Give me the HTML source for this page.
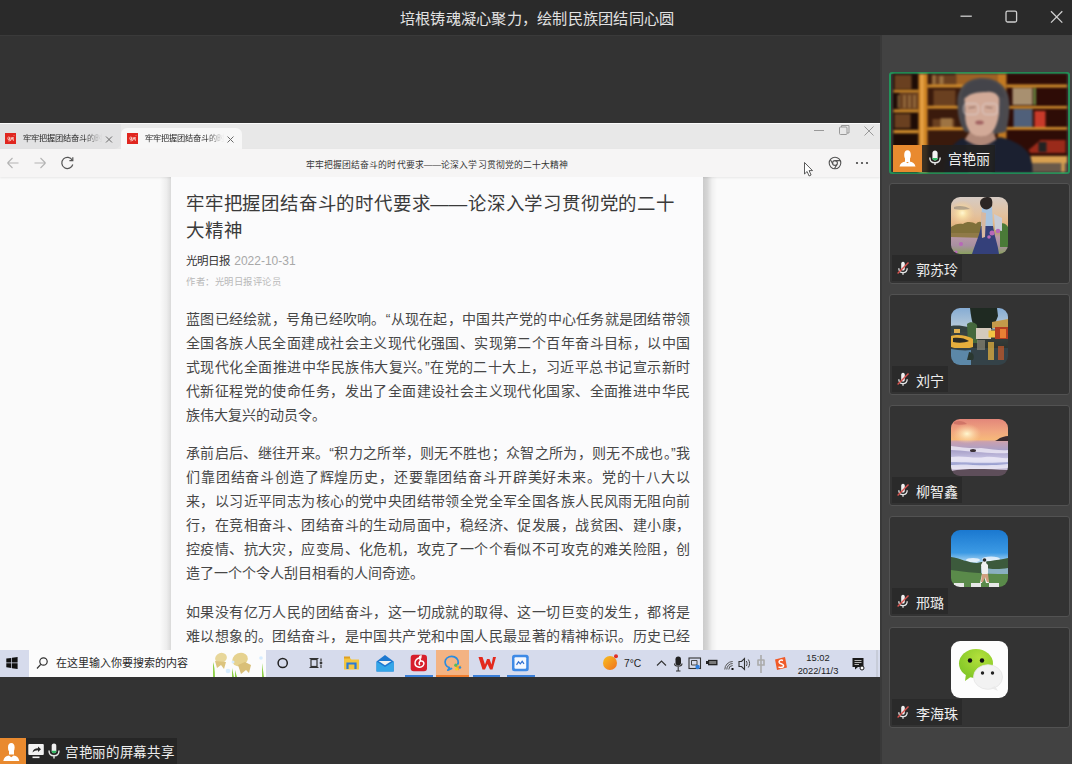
<!DOCTYPE html>
<html lang="zh-CN"><head><meta charset="utf-8">
<style>
*{margin:0;padding:0;box-sizing:border-box}
html,body{width:1072px;height:764px;overflow:hidden;background:#333;font-family:"Liberation Sans",sans-serif}
.a{position:absolute}
#title{left:0;top:0;width:1072px;height:35px;background:#2a2a2a}
#title .t{left:400px;width:274px;top:8.5px;text-align:justify;text-align-last:justify;color:#e2e2e2;font-size:15.2px;line-height:19px;white-space:nowrap}
#main{left:0;top:35px;width:880px;height:729px;background:#333;border-top:1px solid #3a3a3a}
#panel{left:880px;top:35px;width:192px;height:729px;background:#424242;border-left:2px solid #393939}
#browser{left:0;top:123px;width:880px;height:554px;background:#fafafa;overflow:hidden}
.tabs{left:0;top:0.5px;width:880px;height:26px;background:#e8e8e8}
.addr{left:0;top:26px;width:880px;height:28px;background:#f6f5f5;box-shadow:0 1px 2px rgba(0,0,0,.08)}
.card{left:171px;top:54px;width:532px;height:480px;background:#fbfbfc}
.shl{left:160px;top:54px;width:11px;height:480px;background:linear-gradient(90deg,rgba(0,0,0,0),rgba(0,0,0,.05) 60%,rgba(0,0,0,.13))}
.shr{left:703px;top:54px;width:14px;height:480px;background:linear-gradient(90deg,rgba(0,0,0,.19),rgba(0,0,0,.15) 30%,rgba(0,0,0,.04) 65%,rgba(0,0,0,0))}
.taskbar{left:0;top:526.5px;width:880px;height:27px;background:#d6dbec}
.tile{left:889px;width:181px;height:101px;background:#333;border:1px solid #525252;border-radius:3px}
.av{left:951px;width:57px;height:57px;border-radius:9px;overflow:hidden}
.av svg{display:block;filter:blur(.7px)}
.lab{left:892px;height:26.2px;background:#2a2a2a}
.fav{width:11px;height:11px;background:#e0261f;color:#fff;font-size:8px;line-height:11px;text-align:center;overflow:hidden}
.fav i{font-style:normal;display:block;transform:skewX(-12deg)}
.tt{font-size:8.2px;line-height:12px;color:#262626;white-space:nowrap;width:80px;overflow:hidden;-webkit-mask-image:linear-gradient(90deg,#000 76%,transparent 99%)}
.art{width:520px;height:470px}
.art .h1{width:488px;text-align:justify;text-align-last:justify;font-size:18.45px;line-height:27px;color:#3a3a3a;white-space:nowrap;height:27px;position:relative;top:2px}
.art .src{position:absolute;top:66px;left:0;font-size:11.5px;line-height:14px;color:#333;white-space:nowrap}
.art .src b{font-weight:normal}
.art .src span{color:#a8a8a8;font-size:12px;margin-left:1px}
.art .au{position:absolute;top:87.5px;left:0;width:95px;text-align:justify;text-align-last:justify;font-size:9.3px;line-height:12px;color:#b8b8b8;white-space:nowrap}
.art .p{position:absolute;left:0;font-size:14px;color:#474747;white-space:nowrap}
.art .p div{height:24px;line-height:24px;width:504px;text-align:justify;text-align-last:justify}

.nm{color:#eee;font-size:14px;line-height:16px;white-space:nowrap;text-align:justify;text-align-last:justify}
</style></head><body>
<div id="title" class="a"><div class="t a">培根铸魂凝心聚力，绘制民族团结同心圆</div>
<svg class="a" style="left:0;top:0" width="1072" height="35"><g stroke="#cfcfcf" stroke-width="1.3" fill="none">
<path d="M960.5 16.2H971.8"/><rect x="1006" y="11.2" width="10.6" height="10.8" rx="1.5"/><path d="M1051 11.3L1062.3 22.6M1062.3 11.3L1051 22.6"/></g></svg></div>
<div id="main" class="a"></div>
<div id="panel" class="a"></div>
<div id="browser" class="a">
  <div class="tabs a"></div>
  <div class="a" style="left:0;top:1px;width:121px;height:25px;background:#e2e2e3;border-radius:0 0 7px 0"></div>
  <div class="a" style="left:121px;top:5px;width:121px;height:22px;background:#f7f7f7;border-radius:6px 6px 0 0"></div>
  <div class="fav a" style="left:5px;top:10px"><svg width="11" height="11" style="display:block"><g stroke="#fbe8e0" stroke-width=".9" fill="none" opacity=".9"><path d="M3.8 3.5C2.8 4.5 2.5 6 3.2 6.6C4 7 4.6 5.5 4.7 4.3M4.7 4.3L4 8.5"/><path d="M5.5 8L6.3 4.5L7 6.5L8 4L8.4 7.8"/><path d="M9 2.5L9.3 3"/></g></svg></div>
  <div class="fav a" style="left:126.5px;top:10px"><svg width="11" height="11" style="display:block"><g stroke="#fbe8e0" stroke-width=".9" fill="none" opacity=".9"><path d="M3.8 3.5C2.8 4.5 2.5 6 3.2 6.6C4 7 4.6 5.5 4.7 4.3M4.7 4.3L4 8.5"/><path d="M5.5 8L6.3 4.5L7 6.5L8 4L8.4 7.8"/><path d="M9 2.5L9.3 3"/></g></svg></div>
  <div class="tt a" style="left:22.5px;top:9.8px">牢牢把握团结奋斗的时代要求</div>
  <div class="tt a" style="left:144.5px;top:9.8px">牢牢把握团结奋斗的时代要求</div>
  <svg class="a" style="left:0;top:0" width="880" height="54"><g stroke="#6a6a6a" stroke-width="1" fill="none">
  <path d="M106 13.5L112 19.5M112 13.5L106 19.5M227.5 13.5L233.5 19.5M233.5 13.5L227.5 19.5"/></g>
  <g stroke="#999" stroke-width="1" fill="none"><path d="M814 7.5H824"/><rect x="839.5" y="4" width="7.5" height="7.5" rx="1"/><path d="M841.5 4V2.5H849V10H847"/>
  <path d="M864.5 3.5L873.5 12.5M873.5 3.5L864.5 12.5"/></g>
  </svg>
  <div class="addr a"></div>
  <svg class="a" style="left:0;top:26px" width="880" height="28">
  <g stroke="#b4b4b4" stroke-width="1.1" fill="none"><path d="M7.5 14H18.5M7.5 14L12.5 9M7.5 14L12.5 19"/><path d="M34.5 14H45.5M45.5 14L40.5 9M45.5 14L40.5 19"/></g>
  <g stroke="#555" stroke-width="1.2" fill="none"><path d="M72.3 11.2A5.6 5.6 0 1 0 72.8 15.5"/><path d="M72.8 8.2V11.6H69.4"/></g>
  <g stroke="#555" stroke-width="1.1" fill="none"><circle cx="835" cy="14" r="5.8"/><circle cx="835" cy="14" r="2.4"/><path d="M835 11.6H840.4M832.9 15.2L830.3 10.5M837 15.4L834.4 19.7"/></g>
  <g fill="#444"><circle cx="857" cy="14" r="1.1"/><circle cx="862" cy="14" r="1.1"/><circle cx="867" cy="14" r="1.1"/></g>
  <path d="M804.5 13.5V25L807.1 22.5L809.1 27L811.1 26L809.1 21.6H812.5Z" fill="#fff" stroke="#333" stroke-width="0.8"/>
  </svg>
  <div class="a" style="left:306px;top:37px;width:262px;text-align:justify;text-align-last:justify;font-size:8.8px;line-height:10px;color:#333;white-space:nowrap">牢牢把握团结奋斗的时代要求——论深入学习贯彻党的二十大精神</div>
  <div class="shl a"></div><div class="shr a"></div><div class="card a"></div>
  <div class="art a" style="left:186px;top:65px">
    <div class="h1">牢牢把握团结奋斗的时代要求——论深入学习贯彻党的二十</div>
    <div class="h1" style="width:55.5px">大精神</div>
    <div class="src"><b>光明日报</b> <span>2022-10-31</span></div>
    <div class="au">作者：光明日报评论员</div>
    <div class="p" style="top:119px">
      <div>蓝图已经绘就，号角已经吹响。“从现在起，中国共产党的中心任务就是团结带领</div>
      <div>全国各族人民全面建成社会主义现代化强国、实现第二个百年奋斗目标，以中国</div>
      <div>式现代化全面推进中华民族伟大复兴。”在党的二十大上，习近平总书记宣示新时</div>
      <div>代新征程党的使命任务，发出了全面建设社会主义现代化国家、全面推进中华民</div>
      <div style="width:140px">族伟大复兴的动员令。</div>
    </div>
    <div class="p" style="top:253px">
      <div>承前启后、继往开来。“积力之所举，则无不胜也；众智之所为，则无不成也。”我</div>
      <div>们靠团结奋斗创造了辉煌历史，还要靠团结奋斗开辟美好未来。党的十八大以</div>
      <div>来，以习近平同志为核心的党中央团结带领全党全军全国各族人民风雨无阻向前</div>
      <div>行，在竞相奋斗、团结奋斗的生动局面中，稳经济、促发展，战贫困、建小康，</div>
      <div>控疫情、抗大灾，应变局、化危机，攻克了一个个看似不可攻克的难关险阻，创</div>
      <div style="width:238px">造了一个个令人刮目相看的人间奇迹。</div>
    </div>
    <div class="p" style="top:411.5px">
      <div>如果没有亿万人民的团结奋斗，这一切成就的取得、这一切巨变的发生，都将是</div>
      <div>难以想象的。团结奋斗，是中国共产党和中国人民最显著的精神标识。历史已经</div>
    </div>
  </div>
  <div class="taskbar a"></div>
  <div class="a" style="left:29px;top:527px;width:237px;height:27px;background:#fcfcfc"></div>
  <div class="a" style="left:56px;top:533px;width:132px;text-align:justify;text-align-last:justify;font-size:11px;line-height:14px;color:#2a2a2a;white-space:nowrap">在这里输入你要搜索的内容</div>
  <div class="a" style="left:436px;top:527px;width:33px;height:27px;background:#f3b383"></div>
  <div class="a" style="left:624px;top:533.5px;font-size:10.3px;line-height:14px;color:#1f1f1f;white-space:nowrap">7°C</div>
  <div class="a" style="left:797px;top:529px;width:42px;font-size:9.3px;line-height:12.5px;color:#222;white-space:nowrap;text-align:center">15:02<br>2022/11/3</div>
  <svg class="a" style="left:0;top:527px" width="880" height="27">
   <g fill="#111"><path d="M6.3 8.6L11.3 7.9V12.6H6.3Z"/><path d="M12 7.8L17.6 7V12.6H12Z"/><path d="M6.3 13.3H11.3V18L6.3 17.3Z"/><path d="M12 13.3H17.6V19L12 18.2Z"/></g>
   <g stroke="#333" stroke-width="1.2" fill="none"><circle cx="43.5" cy="11.5" r="3.7"/><path d="M40.8 14.3L37 18.5"/></g>
   <circle cx="282.7" cy="13" r="4.6" stroke="#222" stroke-width="1.5" fill="none"/>
   <g stroke="#333" stroke-width="1.2" fill="none"><rect x="311" y="9.5" width="6" height="7"/><path d="M309.5 8.5H318.5M309.5 17.5H318.5M321 8.5V11M321 15V18"/><circle cx="321" cy="13" r=".8" fill="#333"/></g>
   <g transform="translate(0,-1.5)"><path d="M344 9.5H350L351.5 11H359V21H344Z" fill="#f3c640"/><rect x="344" y="8" width="6" height="2" fill="#e0a020"/><path d="M347.5 20.5V15H355.5V20.5" stroke="#2a7bd8" stroke-width="2.2" fill="none"/>
   </g><path d="M376.5 11.5L385 5L393.7 11.5V21.5H376.5Z" fill="#1d78d0"/><path d="M376.5 11.5L385 17L393.7 11.5V21.5H376.5Z" fill="#34a6e8"/><path d="M378.5 11H391.5L385 15.3Z" fill="#f2f2f2"/>
   <g transform="translate(0,-3.2)"><rect x="410.7" y="8" width="16.3" height="16.4" rx="3" fill="#d71f2c"/><g stroke="#fff" stroke-width="1.5" fill="none"><path d="M421.5 11C417 10.5 414.5 14 415 17C415.7 20.5 420.5 21.5 423 19C425 17 423.7 14 421 14.3C419 14.6 418.5 17 420 18"/><path d="M420.5 14.3L419.7 10.5C419.5 9.5 420.5 9 421.8 9.5"/></g>
   </g><rect x="405" y="25" width="28" height="2" fill="#3b7fd8"/>
   <rect x="436" y="25" width="33" height="2" fill="#ef7d2e"/>
   <path d="M457.5 14.8A6.6 5.8 0 1 0 449.5 17.6L447.8 20.2L452.2 18.3" stroke="#2a8ce0" stroke-width="1.7" fill="none" stroke-linejoin="round"/><path d="M455 16L461.5 15.5L458.5 20.5Z" fill="#f7a52a"/><circle cx="455.8" cy="15.2" r="1.6" fill="#52bf5a"/><circle cx="456.5" cy="19" r="1.5" fill="#f5d020"/><circle cx="460" cy="17.5" r="1.2" fill="#2a8ce0"/>
   <g transform="translate(0,-2.5)"><path d="M478.5 9.5H482.5L485 17L487 11.5H489.5L491.5 17L493 9.5H496L492.5 22H490L487.5 16.5L485 22H482.5Z" fill="#e3291d"/>
   </g><rect x="473" y="25" width="27" height="2" fill="#3b7fd8"/>
   <g transform="translate(0,-3.2)"><rect x="512" y="8" width="16.7" height="16.4" rx="2.5" fill="#3e8ae6"/><rect x="514.5" y="10.5" width="11.7" height="11.4" rx="1" fill="#f4f8ff"/><path d="M516.5 18L518.5 15L520.3 17L522.2 14.5L524 17" stroke="#2f6fd0" stroke-width="1.2" fill="none"/>
   </g><rect x="507" y="25" width="28" height="2" fill="#3b7fd8"/>
   <defs><linearGradient id="wx" x1="0" y1="0" x2="1" y2="1"><stop offset="0" stop-color="#f8c020"/><stop offset="1" stop-color="#f07020"/></linearGradient></defs><circle cx="610" cy="13" r="7" fill="url(#wx)"/><circle cx="616" cy="6.3" r="2" fill="#e0302a"/>
   <path d="M657 15.5L661.5 11L666 15.5" stroke="#333" stroke-width="1.1" fill="none"/>
   <rect x="675.5" y="6.5" width="5.5" height="9" rx="2.7" fill="#222"/><path d="M674.5 13.5C674.5 17 682 17 682 13.5M678.2 17V20.5M676 21H680.5" stroke="#333" stroke-width="1.1" fill="none"/>
   <rect x="689" y="8" width="11.5" height="10.5" stroke="#333" stroke-width="1.1" fill="none"/><path d="M691.5 10.5H697V15H691.5Z" stroke="#333" stroke-width=".9" fill="none"/><circle cx="697.6" cy="17" r="2.2" fill="#2f7fe0"/>
   <rect x="708" y="9.8" width="9.5" height="5.5" fill="#222"/><rect x="706" y="11" width="2" height="3" fill="#222"/><rect x="709.2" y="11" width="7" height="3" fill="#7a7a7a"/>
   <g stroke="#555" stroke-width="1" fill="none"><path d="M724.8 19.5A8 8 0 0 1 732.7 11.5M726.8 19.5A6 6 0 0 1 732.7 13.5M728.8 19.5A4 4 0 0 1 732.7 15.5"/></g><rect x="731.5" y="18" width="2" height="2" fill="#111"/>
   <path d="M739 11.5H741.5L744.5 8.5V19.5L741.5 16.5H739Z" stroke="#333" stroke-width="1.1" fill="none"/><path d="M746.3 11C747.3 12.3 747.3 14.7 746.3 16M748.3 9.5C750 11.7 750 15.3 748.3 17.5" stroke="#444" stroke-width="1" fill="none"/>
   <g stroke="#aaa" stroke-width="1.6" fill="none"><path d="M761 5V23M757.5 10H764.5M758 10V15H764V10"/></g>
   <path d="M775 9.5L785 7L787 17.5L777 20Z" fill="#f05a28"/><path d="M783 10.5C781 9.5 778.5 10.5 779.2 12.5C779.8 14 783 13.5 783.5 15.5C784 17.5 780.5 18 778.5 16.8" stroke="#fff" stroke-width="1.5" fill="none"/>
   <path d="M852.5 8H863.5V17H858L855 19.5V17H852.5Z" fill="#1a1a1a"/><g stroke="#ddd" stroke-width=".8"><path d="M854.5 10.5H861.5M854.5 12.5H861.5M854.5 14.5H859"/></g><circle cx="862" cy="18" r="2" fill="#fff" stroke="#1a1a1a" stroke-width="1"/>
   <rect x="876.5" y="0" width="1" height="27" fill="#b8bdc6"/>
  </svg>
  <svg class="a" style="left:212px;top:527px" width="54" height="27">
   <ellipse cx="9" cy="8" rx="6" ry="5" fill="#e8d79a" transform="rotate(-20 9 8)"/><path d="M3 11L5 18L9 15L12 19L14 12" fill="#dcc47e"/>
   <ellipse cx="28" cy="9.5" rx="8" ry="6.5" fill="#e6d28f" transform="rotate(-25 28 9.5)"/><path d="M26 15L29 24L34 20L37 23L39 15L33 12Z" fill="#d9bf78"/>
   <path d="M1 27V12C2 15 3 20 3 27Z" fill="#8fd04a"/><path d="M20 27V18L22 27ZM23 27V20L25 27Z" fill="#8fd04a"/><path d="M50 27V13L52 27Z" fill="#8fd04a"/>
   <circle cx="16" cy="21" r="2.3" fill="#d6ecff"/><circle cx="21" cy="12" r="1.5" fill="#d6ecff"/><circle cx="49" cy="8" r="1.8" fill="#d6ecff"/>
  </svg>
</div>
<div class="a" style="left:889px;top:71.8px;width:181.2px;height:102px;border:2px solid #23935a;border-radius:3px;background:#3a3a3a"></div>
<svg class="a" style="left:892.5px;top:74px;filter:blur(.8px)" width="174" height="98" viewBox="892.5 74 174 98">
 <rect x="892.5" y="74" width="174" height="98" fill="#2a0e08"/>
 <rect x="892.5" y="74" width="26" height="98" fill="#1e0c06"/>
 <rect x="927" y="74" width="71" height="98" fill="#3a1a0c"/>
 <rect x="1006" y="74" width="61" height="98" fill="#2e0c06"/>
 <rect x="955" y="74" width="45" height="11" fill="#b8742a" opacity=".8"/>
 <g fill="#6a4020"><rect x="894" y="75" width="17" height="14"/><rect x="899" y="93" width="19" height="16"/><rect x="894" y="114" width="16" height="14"/><rect x="931" y="75" width="25" height="10"/><rect x="933" y="90" width="22" height="16"/><rect x="932" y="119" width="22" height="9"/></g>
 <g fill="#c9a060" opacity=".55"><rect x="932" y="75" width="3" height="9"/><rect x="939" y="76" width="4" height="8"/><rect x="940" y="118" width="12" height="10"/><rect x="897" y="95" width="2" height="13"/><rect x="903" y="95" width="2" height="13"/><rect x="908" y="95" width="2" height="13"/><rect x="913" y="95" width="2" height="13"/></g>
 <g fill="#d08c2c"><rect x="893" y="89.8" width="25" height="2.7"/><rect x="893" y="109.4" width="25" height="3"/><rect x="893" y="129.9" width="25" height="3.4"/><rect x="927" y="84.5" width="71" height="3"/><rect x="927" y="105.8" width="71" height="2.8"/><rect x="927" y="127.2" width="71" height="3"/><rect x="1006" y="84.5" width="61" height="3"/><rect x="1006" y="106" width="61" height="2.6"/><rect x="1006" y="127" width="61" height="2.8"/></g>
 <rect x="918" y="74" width="9" height="98" fill="#cf8424"/><rect x="920" y="74" width="3" height="98" fill="#e8a448"/>
 <rect x="997.5" y="74" width="8.5" height="98" fill="#c27a22"/>
 <g><rect x="1012" y="88" width="20" height="17" fill="#a89070"/><rect x="1033" y="88" width="2.5" height="17" fill="#6a8a40"/><rect x="1013" y="109" width="19" height="18" fill="#50607a"/><rect x="1034" y="111" width="11" height="16" fill="#c83a2a"/><path d="M1028 150L1040 140L1065 140V153H1030Z" fill="#9a2a1a"/><rect x="1038" y="142" width="8" height="10" fill="#222"/><rect x="1030" y="156" width="37" height="7" fill="#d8a050"/><rect x="1030" y="163" width="37" height="9" fill="#6a5a4a"/><rect x="1061" y="156" width="3" height="16" fill="#d8a050"/></g>
 <path d="M957 104C956 88 966 78 982 78C999 78 1009 89 1009 104C1009 114 1008 124 1005 132L995 134L965 132C959 126 957 114 957 104Z" fill="#4c4a4e"/>
 <path d="M963 98C963 91 970 88 980 88C990 88 998 92 999 100C1000 112 997 128 990 134C985 138 976 138 971 134C965 128 962 112 963 98Z" fill="#d2aa98"/>
 <path d="M961 100C961 86 970 80 982 80C995 80 1003 87 1004 99L999 98C996 93 992 91 986 92C978 92 970 93 966 97Z" fill="#44444a"/>
 <path d="M999 96L1004 98L1003 126L998 130Z" fill="#4a4a50"/><path d="M961 98L964 98L965 124L961 126Z" fill="#4a4a50"/>
 <g stroke="#e0d4d4" stroke-width="1.1" fill="none" opacity=".75"><rect x="963" y="103.5" width="15" height="11" rx="4"/><rect x="982" y="103.5" width="15" height="11" rx="4"/></g>
 <path d="M968 108L975 107M985 107L992 108" stroke="#6a4a44" stroke-width="1.2" opacity=".7"/>
 <ellipse cx="979" cy="122.5" rx="4.2" ry="2" fill="#a06060"/>
 <path d="M969 132C975 138 986 138 993 132L996 140L992 172H966L964 140Z" fill="#b08878"/>
 <path d="M944 172C945 156 950 144 962 138C968 142 974 146 980 146C986 146 993 142 999 137C1013 140 1024 146 1029 155C1032 162 1032 168 1032 172Z" fill="#1b2030"/>
 <path d="M966 143C972 148 988 148 994 143L992 172H968Z" fill="#34363e"/>
</svg>
<div class="a" style="left:892.5px;top:144.5px;width:29.5px;height:27.2px;background:#e98a2f"></div>
<svg class="a" style="left:892.5px;top:144.5px" width="30" height="28"><ellipse cx="14.5" cy="10" rx="3.3" ry="4.8" fill="#fff"/><path d="M6.5 21.5C7 18.5 9.5 16.8 12.5 16.5L14.5 18.2L16.5 16.5C19.5 16.8 22 18.5 22.5 21.5Z" fill="#fff"/><rect x="12" y="13" width="5" height="4" fill="#fff"/></svg>
<div class="a" style="left:922px;top:144.5px;width:72.5px;height:27.2px;background:rgba(30,30,30,.85)"></div>
<svg class="a" style="left:928px;top:149px" width="14" height="18"><path d="M7 1.5C8.4 1.5 9.6 2.5 9.6 4V9.2C9.6 10.6 8.4 11.4 7 11.4C5.6 11.4 4.4 10.6 4.4 9.2V4C4.4 2.5 5.6 1.5 7 1.5Z" fill="#f2f2f2"/><path d="M4.4 9H9.6V9.3C9.6 10.6 8.4 11.4 7 11.4C5.6 11.4 4.4 10.6 4.4 9.3Z" fill="#2fb760"/><path d="M1.8 8.5C1.8 12 4 13.8 7 13.8C10 13.8 12.2 12 12.2 8.5M7 13.8V16" stroke="#e8e8e8" stroke-width="1.4" fill="none"/></svg>
<div class="nm a" style="left:948px;top:151px;width:41px">宫艳丽</div>
<div class="tile a" style="top:183px"></div>
<div class="av a" style="top:197px"><svg width="57" height="57"><defs><linearGradient id="g1" x1="0" y1="0" x2="0" y2="1"><stop offset="0" stop-color="#d6cbc4"/><stop offset=".3" stop-color="#e2c2a0"/><stop offset=".45" stop-color="#e6b888"/><stop offset=".62" stop-color="#b8a070"/><stop offset=".7" stop-color="#b898a8"/><stop offset=".85" stop-color="#a890a0"/><stop offset="1" stop-color="#8aa060"/></linearGradient><radialGradient id="s1" cx=".2" cy=".28" r=".22"><stop offset="0" stop-color="#fff6d0"/><stop offset=".3" stop-color="#f8e0a8"/><stop offset="1" stop-color="#f0c890" stop-opacity="0"/></radialGradient></defs>
<rect width="57" height="57" fill="url(#g1)"/><rect width="57" height="57" fill="url(#s1)"/>
<path d="M3 10C8 8 15 9 19 12C14 13 7 13 3 12Z" fill="#8a8078" opacity=".6"/>
<path d="M0 37V30C4 27 8 26 12 27C16 24 22 25 25 27C27 24 31 24 33 28V38Z" fill="#80703a"/>
<path d="M0 40V36H34V41Z" fill="#907a48"/>
<path d="M49 27C52 25 55 27 57 30V50H49Z" fill="#4a7a38"/>
<path d="M30 29C29 37 25 45 21 57H48C47 48 43 38 42 29Z" fill="#34407a"/>
<path d="M31 10C33 8 38 8 41 10L42 29H30Z" fill="#a8c4e0"/>
<path d="M30 15L35 16L34 40L31 41Z" fill="#d8b8a0"/>
<path d="M29 6C29 1 34 0 37 0C41 0 42 4 41 9C39 12 36 13 33 12C31 11 29 9 29 6Z" fill="#2c2624"/>
<path d="M43 17L51 21V34L44 33Z" fill="#c8ccd6"/>
<g fill="#b868b8"><circle cx="41" cy="36" r="2.5"/><circle cx="47" cy="34" r="2.2"/><circle cx="38" cy="40" r="1.8"/><circle cx="10" cy="47" r="2"/><circle cx="5" cy="55" r="1.6"/></g></svg></div>
<div class="lab a" style="top:255px;width:70px"><svg class="a" style="left:5px;top:6px" width="13" height="15"><path d="M6 .8C7.3 .8 7.8 1.8 7.8 3V7.5C7.8 8.8 7.2 9.6 6 9.6C4.8 9.6 4.2 8.8 4.2 7.5V3C4.2 1.8 4.7 .8 6 .8Z" fill="#f0f0f0"/><path d="M1.8 7.2C1.8 10.2 3.6 11.6 6 11.6C8.4 11.6 10.2 10.2 10.2 7.2M6 11.6V13.8" stroke="#e8e8e8" stroke-width="1.3" fill="none"/><path d="M.6 12.5L11.5 1.5" stroke="#d9534f" stroke-width="1.4"/></svg><div class="nm a" style="left:24px;top:6.8px;width:41.5px">郭苏玲</div></div>
<div class="tile a" style="top:294px"></div>
<div class="av a" style="top:308px"><svg width="57" height="57"><defs><linearGradient id="g2" x1="0" y1="0" x2="0" y2="1"><stop offset="0" stop-color="#86acd4"/><stop offset=".35" stop-color="#b8cad8"/><stop offset=".4" stop-color="#3a4444"/><stop offset=".7" stop-color="#2e3430"/><stop offset="1" stop-color="#3a4a50"/></linearGradient></defs>
<rect width="57" height="57" fill="url(#g2)"/>
<path d="M0 18C6 17 12 18 17 19V24H0Z" fill="#34403e"/>
<path d="M19 0H46L47 8C45 13 43 18 41 21L24 21C21 16 20 8 19 0Z" fill="#1f2a22"/>
<path d="M16 16C19 13 24 14 26 17L27 35L17 35Z" fill="#44683c"/>
<path d="M41 14C46 13 52 12 57 11V20H41Z" fill="#c49a4a"/>
<path d="M25 20H40V31H25Z" fill="#d4cabc"/><rect x="37.5" y="22.5" width="6.5" height="7" fill="#f2c444"/>
<path d="M44 19H57V31H44Z" fill="#b43e22"/><rect x="49" y="21" width="6" height="9" fill="#e88034"/>
<path d="M3 21H9V25H3Z" fill="#e0b050"/>
<path d="M0 28C6 26 16 27 22 31V39C16 41 6 41 0 39Z" fill="#e6ae3c"/><path d="M2 30C7 29 14 30 18 33C14 35 7 35 2 34Z" fill="#2a2a24"/>
<path d="M0 40H57V57H0Z" fill="#344248"/>
<path d="M0 41C6 42 14 43 20 42V57H0Z" fill="#5c88a8"/>
<rect x="37" y="34" width="6" height="18" fill="#e0b040" opacity=".75"/><rect x="47" y="38" width="6" height="14" fill="#c85a2a" opacity=".7"/><rect x="26" y="32" width="8" height="10" fill="#8a8878" opacity=".7"/>
<path d="M18 44C22 44 24 48 22 52H16Z" fill="#2a3830"/></svg></div>
<div class="lab a" style="top:366px;width:56px"><svg class="a" style="left:5px;top:6px" width="13" height="15"><path d="M6 .8C7.3 .8 7.8 1.8 7.8 3V7.5C7.8 8.8 7.2 9.6 6 9.6C4.8 9.6 4.2 8.8 4.2 7.5V3C4.2 1.8 4.7 .8 6 .8Z" fill="#f0f0f0"/><path d="M1.8 7.2C1.8 10.2 3.6 11.6 6 11.6C8.4 11.6 10.2 10.2 10.2 7.2M6 11.6V13.8" stroke="#e8e8e8" stroke-width="1.3" fill="none"/><path d="M.6 12.5L11.5 1.5" stroke="#d9534f" stroke-width="1.4"/></svg><div class="nm a" style="left:24px;top:6.8px;width:28px">刘宁</div></div>
<div class="tile a" style="top:405px"></div>
<div class="av a" style="top:419px"><svg width="57" height="57"><defs><linearGradient id="g3" x1="0" y1="0" x2="0" y2="1"><stop offset="0" stop-color="#e3877a"/><stop offset=".22" stop-color="#f1a680"/><stop offset=".36" stop-color="#f6b87a"/><stop offset=".4" stop-color="#c9a0b0"/><stop offset=".55" stop-color="#a8a0c8"/><stop offset=".7" stop-color="#c8c4e4"/><stop offset=".8" stop-color="#9aa0d0"/><stop offset=".9" stop-color="#d4c8dc"/><stop offset="1" stop-color="#6a5a64"/></linearGradient><radialGradient id="s3" cx=".28" cy=".37" r=".25"><stop offset="0" stop-color="#fff8d0"/><stop offset="1" stop-color="#ffd8a0" stop-opacity="0"/></radialGradient></defs>
<rect width="57" height="57" fill="url(#g3)"/><rect width="57" height="40" fill="url(#s3)"/>
<path d="M3 3C8 1 13 2 16 5C11 6 6 6 3 5Z" fill="#c86a60" opacity=".7"/>
<path d="M46 21C50 18 54 17 57 17V22H44Z" fill="#3a2a30"/>
<g fill="#f4f0fa" opacity=".75"><path d="M0 27C10 28 20 30 30 29C40 30 50 32 57 31V34C45 35 30 33 0 31Z"/><path d="M0 38C12 36 22 40 34 38C44 37 52 40 57 39V43C45 44 30 44 0 43Z"/><path d="M0 46C15 44 30 48 57 45V49C40 51 20 50 0 50Z"/></g>
<path d="M0 52C15 49 35 50 57 51V57H0Z" fill="#5e4e5a"/><ellipse cx="22" cy="31.5" rx="3" ry="1.5" fill="#3a3036"/></svg></div>
<div class="lab a" style="top:477px;width:70px"><svg class="a" style="left:5px;top:6px" width="13" height="15"><path d="M6 .8C7.3 .8 7.8 1.8 7.8 3V7.5C7.8 8.8 7.2 9.6 6 9.6C4.8 9.6 4.2 8.8 4.2 7.5V3C4.2 1.8 4.7 .8 6 .8Z" fill="#f0f0f0"/><path d="M1.8 7.2C1.8 10.2 3.6 11.6 6 11.6C8.4 11.6 10.2 10.2 10.2 7.2M6 11.6V13.8" stroke="#e8e8e8" stroke-width="1.3" fill="none"/><path d="M.6 12.5L11.5 1.5" stroke="#d9534f" stroke-width="1.4"/></svg><div class="nm a" style="left:24px;top:6.8px;width:41.5px">柳智鑫</div></div>
<div class="tile a" style="top:516px"></div>
<div class="av a" style="top:530px"><svg width="57" height="57"><defs><linearGradient id="g4" x1="0" y1="0" x2="0" y2="1"><stop offset="0" stop-color="#1a78d0"/><stop offset=".4" stop-color="#3c9ae4"/><stop offset=".6" stop-color="#c8e4f4"/><stop offset="1" stop-color="#bcd8ec"/></linearGradient></defs>
<rect width="57" height="57" fill="url(#g4)"/>
<ellipse cx="22" cy="30" rx="7" ry="2" fill="#f4f8fc" opacity=".8"/><ellipse cx="40" cy="29" rx="9" ry="2.5" fill="#f4f8fc" opacity=".8"/><path d="M0 27C8 28 18 33 26 33C34 31 44 31 57 28V45H0Z" fill="#3c5a3c"/>
<path d="M30 37C38 39 46 40 57 38V44H30Z" fill="#8ab0c0"/>
<path d="M0 40C15 42 30 44 57 44V57H0Z" fill="#5a8a4a"/>
<path d="M3 53H13V57H3ZM20 53H30V57H20ZM38 53H48V57H38Z" fill="#e8e8e8"/>
<path d="M33 29C35 29 36 31 35 33L37 35L37 43L36 46L38 53H35L33 46L31 53H29L31 44L30 35Z" fill="#f0f0f0"/><circle cx="33.5" cy="30" r="1.8" fill="#2a2a2a"/><path d="M31 44L37 44L38 52H36L34 47L32 52H30Z" fill="#d0a080"/></svg></div>
<div class="lab a" style="top:588px;width:56px"><svg class="a" style="left:5px;top:6px" width="13" height="15"><path d="M6 .8C7.3 .8 7.8 1.8 7.8 3V7.5C7.8 8.8 7.2 9.6 6 9.6C4.8 9.6 4.2 8.8 4.2 7.5V3C4.2 1.8 4.7 .8 6 .8Z" fill="#f0f0f0"/><path d="M1.8 7.2C1.8 10.2 3.6 11.6 6 11.6C8.4 11.6 10.2 10.2 10.2 7.2M6 11.6V13.8" stroke="#e8e8e8" stroke-width="1.3" fill="none"/><path d="M.6 12.5L11.5 1.5" stroke="#d9534f" stroke-width="1.4"/></svg><div class="nm a" style="left:24px;top:6.8px;width:28px">邢璐</div></div>
<div class="tile a" style="top:627px"></div>
<div class="av a" style="top:641px"><svg width="57" height="57"><rect width="57" height="57" fill="#fdfdfd"/>
<defs><radialGradient id="wg" cx=".6" cy=".3" r=".8"><stop offset="0" stop-color="#b4e03c"/><stop offset="1" stop-color="#7cc424"/></radialGradient></defs>
<ellipse cx="25" cy="22.5" rx="17" ry="14.5" fill="url(#wg)"/><path d="M15 33L14 40L21 35Z" fill="#86c828"/>
<circle cx="19" cy="19.5" r="2.2" fill="#111"/><circle cx="31" cy="19.5" r="2.2" fill="#111"/>
<ellipse cx="37" cy="36" rx="14.5" ry="12.3" fill="#f2f2f2" stroke="#e4e4e4" stroke-width=".8"/><path d="M44 45L47 50L40 47Z" fill="#eaeaea"/>
<circle cx="31.5" cy="32" r="1.7" fill="#222"/><circle cx="41.5" cy="32" r="1.7" fill="#222"/></svg></div>
<div class="lab a" style="top:699px;width:70px"><svg class="a" style="left:5px;top:6px" width="13" height="15"><path d="M6 .8C7.3 .8 7.8 1.8 7.8 3V7.5C7.8 8.8 7.2 9.6 6 9.6C4.8 9.6 4.2 8.8 4.2 7.5V3C4.2 1.8 4.7 .8 6 .8Z" fill="#f0f0f0"/><path d="M1.8 7.2C1.8 10.2 3.6 11.6 6 11.6C8.4 11.6 10.2 10.2 10.2 7.2M6 11.6V13.8" stroke="#e8e8e8" stroke-width="1.3" fill="none"/><path d="M.6 12.5L11.5 1.5" stroke="#d9534f" stroke-width="1.4"/></svg><div class="nm a" style="left:24px;top:6.8px;width:41.5px">李海珠</div></div>
<div class="a" style="left:0;top:738px;width:177px;height:26px;background:#262626"></div>
<div class="a" style="left:0;top:738px;width:25.5px;height:26px;background:#e98a2f"></div>
<svg class="a" style="left:0;top:738px" width="180" height="26">
 <ellipse cx="11.3" cy="9.5" rx="3.3" ry="4.6" fill="#fff"/><rect x="9" y="12.5" width="5" height="4" fill="#fff"/><path d="M3.3 23C3.8 19.5 6 17.8 9 17.5L11.3 19.2L13.6 17.5C16.6 17.8 18.8 19.5 19.3 23Z" fill="#fff"/>
 <rect x="28.3" y="6" width="15.5" height="11" rx="1" fill="#f2f2f2"/><path d="M32.5 14.5C33 11.5 35 10.2 38 10.2V8.5L41 11.3L38 14V12.2C35.8 12.2 34.2 13 32.5 14.5Z" fill="#262626"/><rect x="32.5" y="18.5" width="7" height="1.6" fill="#f2f2f2"/>
 <path d="M54 5.5C55.3 5.5 56.3 6.4 56.3 7.8V13C56.3 14.4 55.3 15.2 54 15.2C52.7 15.2 51.7 14.4 51.7 13V7.8C51.7 6.4 52.7 5.5 54 5.5Z" fill="#f0f0f0"/><path d="M51.7 12.8H56.3V13.2C56.3 14.4 55.3 15.2 54 15.2C52.7 15.2 51.7 14.4 51.7 13.2Z" fill="#2fb760"/><path d="M49 12.5C49 16 51 17.8 54 17.8C57 17.8 59 16 59 12.5M54 17.8V20.5" stroke="#e8e8e8" stroke-width="1.4" fill="none"/>
</svg>
<div class="nm a" style="left:65px;top:744.5px;font-size:13.5px;width:108.5px">宫艳丽的屏幕共享</div>
</body></html>
